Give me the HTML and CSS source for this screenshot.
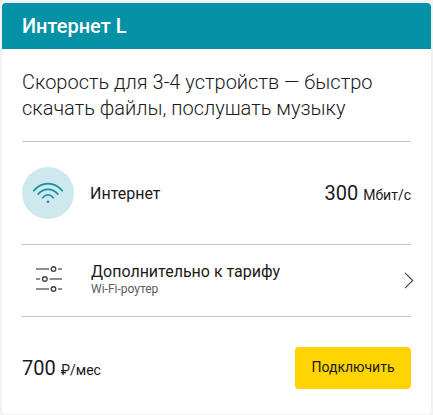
FILE: index.html
```
<!DOCTYPE html>
<html lang="ru">
<head>
    <meta charset="UTF-8">
    <meta name="viewport" content="width=device-width, initial-scale=1.0">
    <title>Интернет L</title>
    <link rel="stylesheet" href="styles.css">
</head>
<body>
    <div class="card">
        <div class="card-header">
            <h2>Интернет L</h2>
        </div>

        <div class="card-body">
            <p class="description">Скорость для 3-4 устройств — быстро скачать файлы, послушать музыку</p>

            <div class="row service">
                <div class="service-icon">
                    <svg width="32" height="24" viewBox="0 0 32 24" fill="none" stroke="#1593a3" stroke-width="1.7" stroke-linecap="round">
                        <path d="M1.7 9.7C9.8 .3 22.2 .3 30.3 9.7"/>
                        <path d="M6.2 13.1C11.8 6.8 20.2 6.8 25.8 13.1"/>
                        <path d="M10.8 16.7C13.8 13 18.2 13 21.2 16.7"/>
                        <circle cx="16" cy="20.7" r="1.3" fill="#1593a3" stroke="none"/>
                    </svg>
                </div>
                <span class="service-name">Интернет</span>
                <span class="value">300 <small>Мбит/с</small></span>
            </div>

            <div class="row options">
                <div class="options-main">
                    <svg class="options-icon" width="26" height="26" viewBox="0 0 26 26" fill="none" stroke="#6b6b6b" stroke-width="1.4">
                        <path d="M0 3H13M22 3H26M0 13H4M13.5 13H26M0 23H13M22 23H26"/>
                        <g stroke="#444">
                            <circle cx="17.5" cy="3" r="2.3"/>
                            <circle cx="8.8" cy="13" r="2.3"/>
                            <circle cx="17.5" cy="23" r="2.3"/>
                        </g>
                    </svg>
                    <div class="options-text">
                        <div class="options-title">Дополнительно к тарифу</div>
                        <div class="options-note">Wi-Fi-роутер</div>
                    </div>
                </div>
                <svg class="arrow" width="10" height="17" viewBox="0 0 10 17" fill="none" stroke="#444" stroke-width="1.1">
                    <path d="M1 .8L8.7 8.5L1 16.2"/>
                </svg>
            </div>

            <div class="footer">
                <span class="value">700 <small>₽/мес</small></span>
                <button class="btn">Подключить</button>
            </div>
        </div>
    </div>
</body>
</html>
```
FILE: styles.css
```
:root {
    --primary-color: #0692a6;
    --accent-color: #ffd400;
    --text-color: #1a1a1a;
    --line-color: #c4c4c4;
}

* {
    margin: 0;
    padding: 0;
    box-sizing: border-box;
}

body {
    background-color: #f2f2f2;
    padding: 3px 2px 1px;
    font-family: Roboto, sans-serif;
    color: var(--text-color);
}

.card {
    height: 411px;
    background-color: #fff;
    border-radius: 4px;
    overflow: hidden;
}

.card-header {
    display: flex;
    align-items: center;
    height: 46px;
    padding: 0 20px;
    background-color: var(--primary-color);
}

.card-header h2 {
    color: #fff;
    font-size: 20px;
    font-weight: 500;
}

.card-body {
    padding: 20px 20px 0;
}

.description {
    height: 72px;
    font-size: 20px;
    font-weight: 300;
    line-height: 26px;
}

.row {
    display: flex;
    align-items: center;
    border-top: 1px solid var(--line-color);
}

.service {
    height: 103px;
}

.service-icon {
    display: flex;
    align-items: center;
    justify-content: center;
    width: 52px;
    height: 52px;
    margin-right: 16px;
    border-radius: 50%;
    background-color: #cde9ed;
}

.service-name {
    flex: 1;
    font-size: 16px;
}

.value {
    font-size: 20px;
}

.value small {
    font-size: 14px;
}

.options {
    height: 73px;
    border-bottom: 1px solid var(--line-color);
}

.options-main {
    display: flex;
    flex: 1;
    align-items: center;
    padding-bottom: 3px;
}

.options-icon {
    margin: 0 29px 0 14px;
}

.options-text {
    flex: 1;
    padding-top: 2px;
}

.options-title {
    font-size: 16px;
    line-height: 19px;
}

.options-note {
    color: #5c5c5c;
    font-size: 12px;
    line-height: 17px;
}

.arrow {
    margin-right: -3px;
}

.footer {
    display: flex;
    align-items: center;
    justify-content: space-between;
    padding-top: 30px;
}

.btn {
    width: 116px;
    height: 42px;
    padding-bottom: 2px;
    border: none;
    border-radius: 4px;
    background-color: var(--accent-color);
    color: var(--text-color);
    font-family: inherit;
    font-size: 14px;
    cursor: pointer;
}
```
